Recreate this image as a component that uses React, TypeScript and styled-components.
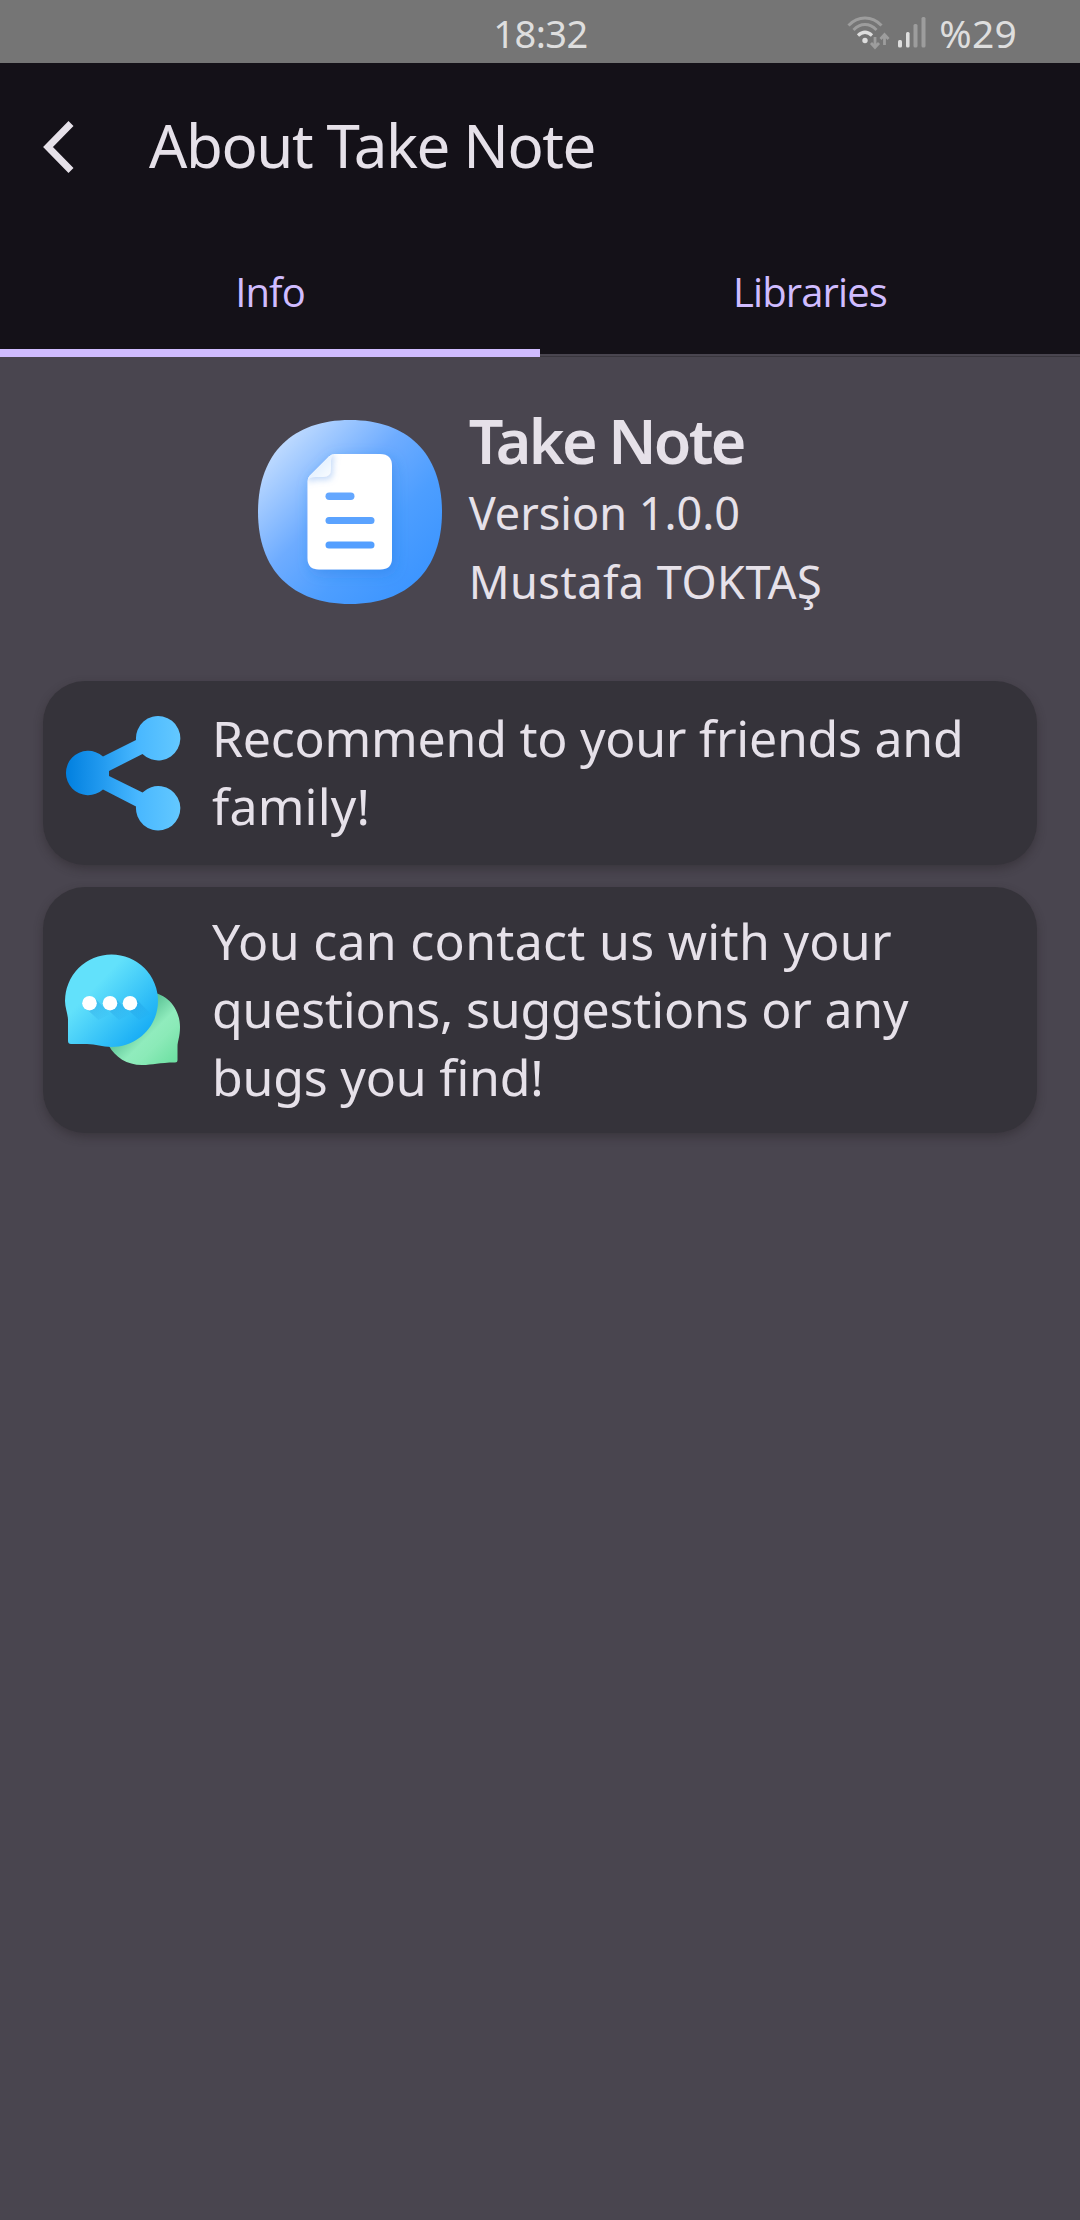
import React from "react";
import styled, { createGlobalStyle } from "styled-components";

const GlobalStyle = createGlobalStyle`
  * { box-sizing: border-box; }
  body { margin: 0; background: #49454f; }
`;

const Screen = styled.div`
  display: flex;
  flex-direction: column;
  width: 1080px;
  height: 2220px;
  overflow: hidden;
  background: #49454f;
  color: #e6e1e9;
  font-family: "Noto Sans", "Open Sans", sans-serif;
`;

const StatusBar = styled.div`
  display: grid;
  grid-template-columns: 1fr auto 1fr;
  align-items: center;
  height: 63px;
  flex: none;
  padding: 2px 63px 0 64px;
  background: #757575;
  color: #dedede;
  font-size: 38px;
  line-height: 52px;
`;

const Clock = styled.span`
  grid-column: 2;
  letter-spacing: -0.5px;
`;

const StatusIcons = styled.div`
  display: flex;
  justify-content: flex-end;
  align-items: center;
`;

const Battery = styled.span`
  margin-left: 13px;
  font-size: 39px;
  letter-spacing: 0.2px;
`;

const Header = styled.header`
  display: flex;
  align-items: center;
  height: 168px;
  flex: none;
  padding-left: 43px;
  background: #141118;
`;

const BackButton = styled.button`
  display: flex;
  width: 106px;
  padding: 0;
  border: 0;
  background: none;
  color: inherit;
`;

const Title = styled.h1`
  margin: 0;
  padding-bottom: 4px;
  font-size: 60px;
  line-height: 80px;
  font-weight: 400;
  letter-spacing: -1.4px;
`;

const Tabs = styled.nav`
  display: grid;
  grid-template-columns: 1fr 1fr;
  height: 126px;
  flex: none;
  background: #141118;
`;

const Tab = styled.div<{ $active?: boolean }>`
  display: flex;
  justify-content: center;
  padding-top: 34px;
  height: 126px;
  box-shadow: ${(p) =>
    p.$active ? "inset 0 -8px #d0bcff" : "inset 0 -1px #39363d, inset 0 -3px #49454f"};
  color: #d0bcff;
  font-family: "Open Sans", "Noto Sans", sans-serif;
  font-size: 40px;
  line-height: 54px;
  letter-spacing: -0.9px;
`;

const Content = styled.main`
  display: flex;
  flex-direction: column;
  padding: 49px 43px 0;
`;

const AppSummary = styled.section`
  display: flex;
  align-items: flex-start;
  justify-content: center;
  height: 275px;
`;

const AppIconBox = styled.div`
  display: flex;
  padding-top: 14px;
  margin-right: 26px;
`;

const AppName = styled.h2`
  margin: -3px 0 0;
  font-size: 61px;
  line-height: 75px;
  font-weight: 600;
  letter-spacing: -2.7px;
`;

const AppLine = styled.p<{ $spacing: number }>`
  margin: 0;
  font-size: 45px;
  line-height: 69px;
  letter-spacing: ${(p) => p.$spacing}px;
`;

const CardList = styled.section`
  display: flex;
  flex-direction: column;
  gap: 22px;
`;

const Card = styled.article<{ $height: number }>`
  display: flex;
  align-items: center;
  height: ${(p) => p.$height}px;
  padding: 0 30px 0 22px;
  border-radius: 42px;
  background: #35333a;
  box-shadow: 0 4px 10px rgba(40, 36, 40, 0.45);
`;

const CardText = styled.p`
  flex: 1;
  margin: 0 0 2px 31px;
  font-size: 50px;
  line-height: 68px;
  white-space: nowrap;
  font-feature-settings: "liga" 1;
`;

const Line = styled.span<{ $spacing: number }>`
  display: block;
  letter-spacing: ${(p) => p.$spacing}px;
`;

const SignalSvg = styled.svg`
  margin-left: 8px;
`;

const WifiIcon = () => (
  <svg width="43" height="34" viewBox="0 0 43 34" fill="none" strokeLinecap="butt">
    <path d="M1.500 9.500C11 -.5 25 -.5 34.500 9.500" stroke="#9d9d9d" strokeWidth="3" />
    <path d="M6.500 14C13.500 6.800 22.500 6.800 29.500 14" stroke="#9d9d9d" strokeWidth="3" />
    <path d="M11 19.500C15.500 15.300 20.500 15.300 25 19.500" stroke="#dedede" strokeWidth="3.200" />
    <circle cx="18" cy="24.500" r="2.700" fill="#dedede" />
    <path d="M28 21V31M24 27L28 31.500L32 27" stroke="#9d9d9d" strokeWidth="2.800" />
    <path d="M37.500 29V19M33.500 23L37.500 18.500L41.500 23" stroke="#9d9d9d" strokeWidth="2.800" />
  </svg>
);

const SignalIcon = () => (
  <SignalSvg width="28" height="32" viewBox="0 0 28 32">
    <rect x="0" y="23" width="4" height="7.500" rx="1.500" fill="#dedede" />
    <rect x="8" y="15" width="3.600" height="15.500" rx="1.500" fill="#dedede" />
    <rect x="15.500" y="7" width="4" height="23.500" rx="1.500" fill="#9d9d9d" />
    <rect x="23.500" y="0" width="4" height="30.500" rx="1.500" fill="#9d9d9d" />
  </SignalSvg>
);

const BackIcon = () => (
  <svg width="31" height="52" viewBox="0 0 31 52" fill="none">
    <path d="M28 2.500L5 26L28 49.500" stroke="#e6e1e9" strokeWidth="7" />
  </svg>
);

const AppIcon = () => (
  <svg width="185" height="185" viewBox="0 0 185 185">
    <defs>
      <linearGradient id="appBg" x1="0.08" y1="0.12" x2="0.88" y2="0.88">
        <stop offset="0" stopColor="#c5deff" />
        <stop offset="0.42" stopColor="#6eacff" />
        <stop offset="0.7" stopColor="#4d9eff" />
        <stop offset="1" stopColor="#3c95ff" />
      </linearGradient>
      <linearGradient id="fold" x1="0.2" y1="0.2" x2="1" y2="1">
        <stop offset="0" stopColor="#d6eaff" />
        <stop offset="1" stopColor="#ffffff" />
      </linearGradient>
      <filter id="pageShadow" x="-30%" y="-30%" width="160%" height="160%">
        <feDropShadow dx="3" dy="4" stdDeviation="7" floodColor="#2878dd" floodOpacity="0.4" />
      </filter>
      <filter id="foldShadow" x="-60%" y="-60%" width="220%" height="220%">
        <feDropShadow dx="2" dy="3" stdDeviation="3" floodColor="#6ea5f0" floodOpacity="0.4" />
      </filter>
      <clipPath id="pageClip">
        <path d="M76.500 34H122Q134 34 134 46V138Q134 149.500 122 149.500H61Q49.500 149.500 49.500 138V61Q49.500 58 52 55.500L71 36.500Q73.500 34 76.500 34Z" />
      </clipPath>
    </defs>
    <path d="M92 0C150 0 184 34 184 92C184 150 150 184 92 184C34 184 0 150 0 92C0 34 34 0 92 0Z" fill="url(#appBg)" />
    <path d="M76.500 34H122Q134 34 134 46V138Q134 149.500 122 149.500H61Q49.500 149.500 49.500 138V61Q49.500 58 52 55.500L71 36.500Q73.500 34 76.500 34Z" fill="#fff" filter="url(#pageShadow)" />
    <g clipPath="url(#pageClip)">
      <path d="M76 34Q73 36 73 41V49Q73 57 65 57H57Q52 57 49 60L46 50L66 30Z" fill="url(#fold)" filter="url(#foldShadow)" />
    </g>
    <rect x="67.500" y="72.500" width="29" height="7.500" rx="3.700" fill="#64a7ff" />
    <rect x="67.500" y="97" width="49" height="7" rx="3.500" fill="#5ba3ff" />
    <rect x="67.500" y="121.500" width="49" height="7" rx="3.500" fill="#539fff" />
  </svg>
);

const ShareIcon = () => (
  <svg width="116" height="116" viewBox="0 0 116 116">
    <defs>
      <linearGradient id="share" gradientUnits="userSpaceOnUse" x1="0" y1="0" x2="115" y2="0">
        <stop offset="0" stopColor="#007fdf" />
        <stop offset="0.33" stopColor="#239bf0" />
        <stop offset="0.64" stopColor="#49b8ff" />
        <stop offset="1" stopColor="#63c8ff" />
      </linearGradient>
    </defs>
    <path fill="url(#share)" d="M38 41.500L71 25A22.200 22.200 0 1 1 77.500 39L44 56V61L77.500 77.500A22.200 22.200 0 1 1 71 91.500L38 74.500A22.200 22.200 0 1 1 38 41.500Z" />
  </svg>
);

const ChatIcon = () => (
  <svg width="116" height="112" viewBox="0 0 116 112">
    <defs>
      <linearGradient id="chatBlue" x1="0.32" y1="0.35" x2="0.86" y2="0.86">
        <stop offset="0" stopColor="#62e1fb" />
        <stop offset="1" stopColor="#18adf5" />
      </linearGradient>
      <linearGradient id="chatGreen" gradientUnits="userSpaceOnUse" x1="63" y1="58" x2="110" y2="105">
        <stop offset="0.1" stopColor="#55be91" />
        <stop offset="0.48" stopColor="#90ecbd" />
        <stop offset="0.65" stopColor="#8beab8" />
        <stop offset="1" stopColor="#70e1a4" />
      </linearGradient>
      <linearGradient id="dotShade" x1="0" y1="0" x2="1" y2="1">
        <stop offset="0.25" stopColor="#168fdc" stopOpacity="0.38" />
        <stop offset="0.9" stopColor="#168fdc" stopOpacity="0" />
      </linearGradient>
    </defs>
    <path d="M77 38C101 36 115 54 115 73C115 83 112.500 87 112.500 93V106Q112.500 108.500 110 108.500C94 108.500 88 111 77 111C62 111 50 103 44 92Z" fill="url(#chatGreen)" />
    <path d="M46.500 0.500A46.500 46.500 0 0 1 93 47C93 73 72 93 46.500 93C37 93 31 90 22 90H6Q3 90 3 87V66C3 60 0 54 0 47A46.500 46.500 0 0 1 46.500 0.500Z" fill="url(#chatBlue)" />
    {[24.5, 45, 65].map((x) => (
      <React.Fragment key={x}>
        <path d={`M${x + 5} 44L${x + 21} 60L${x + 9} 66L${x - 4} 54Z`} fill="url(#dotShade)" />
        <circle cx={x} cy="49.200" r="7.300" fill="#fff" />
      </React.Fragment>
    ))}
  </svg>
);

export default function App() {
  return (
    <Screen>
      <GlobalStyle />
      <StatusBar>
        <Clock>18:32</Clock>
        <StatusIcons>
          <WifiIcon />
          <SignalIcon />
          <Battery>%29</Battery>
        </StatusIcons>
      </StatusBar>
      <Header>
        <BackButton aria-label="Back">
          <BackIcon />
        </BackButton>
        <Title>About Take Note</Title>
      </Header>
      <Tabs>
        <Tab $active>Info</Tab>
        <Tab>Libraries</Tab>
      </Tabs>
      <Content>
        <AppSummary>
          <AppIconBox>
            <AppIcon />
          </AppIconBox>
          <div>
            <AppName>Take Note</AppName>
            <AppLine $spacing={0}>Version 1.0.0</AppLine>
            <AppLine $spacing={0.5}>Mustafa TOKTAŞ</AppLine>
          </div>
        </AppSummary>
        <CardList>
          <Card $height={184}>
            <ShareIcon />
            <CardText>
              <Line $spacing={-0.25}>Recommend to your friends and </Line>
              <Line $spacing={0.2}>family!</Line>
            </CardText>
          </Card>
          <Card $height={246}>
            <ChatIcon />
            <CardText>
              <Line $spacing={0.3}>You can contact us with your </Line>
              <Line $spacing={-0.2}>questions, suggestions or any </Line>
              <Line $spacing={-0.2}>bugs you find!</Line>
            </CardText>
          </Card>
        </CardList>
      </Content>
    </Screen>
  );
}
